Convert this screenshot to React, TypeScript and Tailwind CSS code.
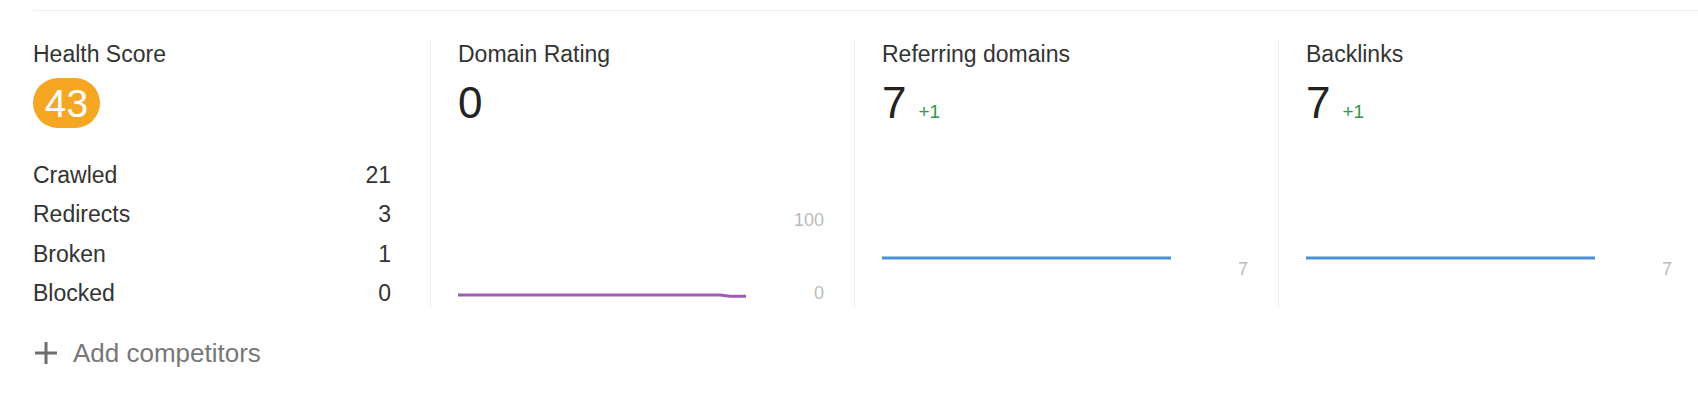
import React from "react";

const font = { fontFamily: '"Liberation Sans", Arial, sans-serif' };

function PlusIcon() {
  return (
    <svg width="22" height="22" viewBox="0 0 22 22" className="shrink-0">
      <rect x="0" y="9.5" width="22" height="3" fill="#6e6e6e" />
      <rect x="9.5" y="0" width="3" height="22" fill="#6e6e6e" />
    </svg>
  );
}

function StatCol({
  title,
  value,
  delta,
  chart,
}: {
  title: string;
  value: string;
  delta?: string;
  chart: React.ReactNode;
}) {
  return (
    <div className="flex h-[268px] w-[424px] shrink-0 flex-col border-l border-[#ececec] pl-[27px] pr-[30px]">
      <div className="h-[28px] text-[23px] leading-[28px] text-[#333]">{title}</div>
      <div className="mt-[9px] flex h-[52px] items-baseline">
        <span className="text-[44px] leading-[52px] text-[#222]">{value}</span>
        {delta && (
          <span className="ml-[12px] text-[19px] leading-[20px] text-[#2e9a4c]">{delta}</span>
        )}
      </div>
      <div className="mt-[81px] flex h-[93px]">{chart}</div>
    </div>
  );
}

function DomainChart() {
  return (
    <>
      <svg width="288" height="93" viewBox="0 0 288 93" className="shrink-0">
        <polyline
          points="0,85 262,85 272,86.3 288,86.3"
          fill="none"
          stroke="#a05cb4"
          strokeWidth="3"
        />
      </svg>
      <div className="flex flex-1 flex-col items-end justify-between text-[18px] leading-[20px] text-[#bbbbbb]">
        <span>100</span>
        <span>0</span>
      </div>
    </>
  );
}

function FlatChart() {
  return (
    <>
      <svg width="289" height="93" viewBox="0 0 289 93" className="shrink-0">
        <line x1="0" y1="48" x2="289" y2="48" stroke="#4a8fd8" strokeWidth="3" />
      </svg>
      <div className="flex flex-1 flex-col items-end pt-[49px] text-[18px] leading-[20px] text-[#bbbbbb]">
        <span>7</span>
      </div>
    </>
  );
}

const rows: [string, string][] = [
  ["Crawled", "21"],
  ["Redirects", "3"],
  ["Broken", "1"],
  ["Blocked", "0"],
];

export default function App() {
  return (
    <div className="h-[404px] w-[1698px] overflow-hidden bg-white" style={font}>
      <div className="ml-[33px] mt-[10px] border-t border-[#eeeeee] pt-[29px]">
        <div className="flex h-[268px] items-start">
          <div className="w-[397px] shrink-0 pr-[39px]">
            <div className="h-[28px] text-[23px] leading-[28px] text-[#333]">Health Score</div>
            <div className="mt-[10px] flex h-[50px] w-[67px] items-center justify-center rounded-full bg-[#f5a623] text-[39px] leading-none text-white">
              43
            </div>
            <div className="mt-[27px] flex flex-col">
              {rows.map(([label, num]) => (
                <div
                  key={label}
                  className="flex h-[39.5px] items-center justify-between text-[23px] text-[#333]"
                >
                  <span>{label}</span>
                  <span>{num}</span>
                </div>
              ))}
            </div>
          </div>
          <StatCol title="Domain Rating" value="0" chart={<DomainChart />} />
          <StatCol title="Referring domains" value="7" delta="+1" chart={<FlatChart />} />
          <StatCol title="Backlinks" value="7" delta="+1" chart={<FlatChart />} />
        </div>
        <div className="mt-[30px] flex h-[30px] items-center gap-[16px] pl-[2px] text-[26px] text-[#777]">
          <PlusIcon />
          <span>Add competitors</span>
        </div>
      </div>
    </div>
  );
}
